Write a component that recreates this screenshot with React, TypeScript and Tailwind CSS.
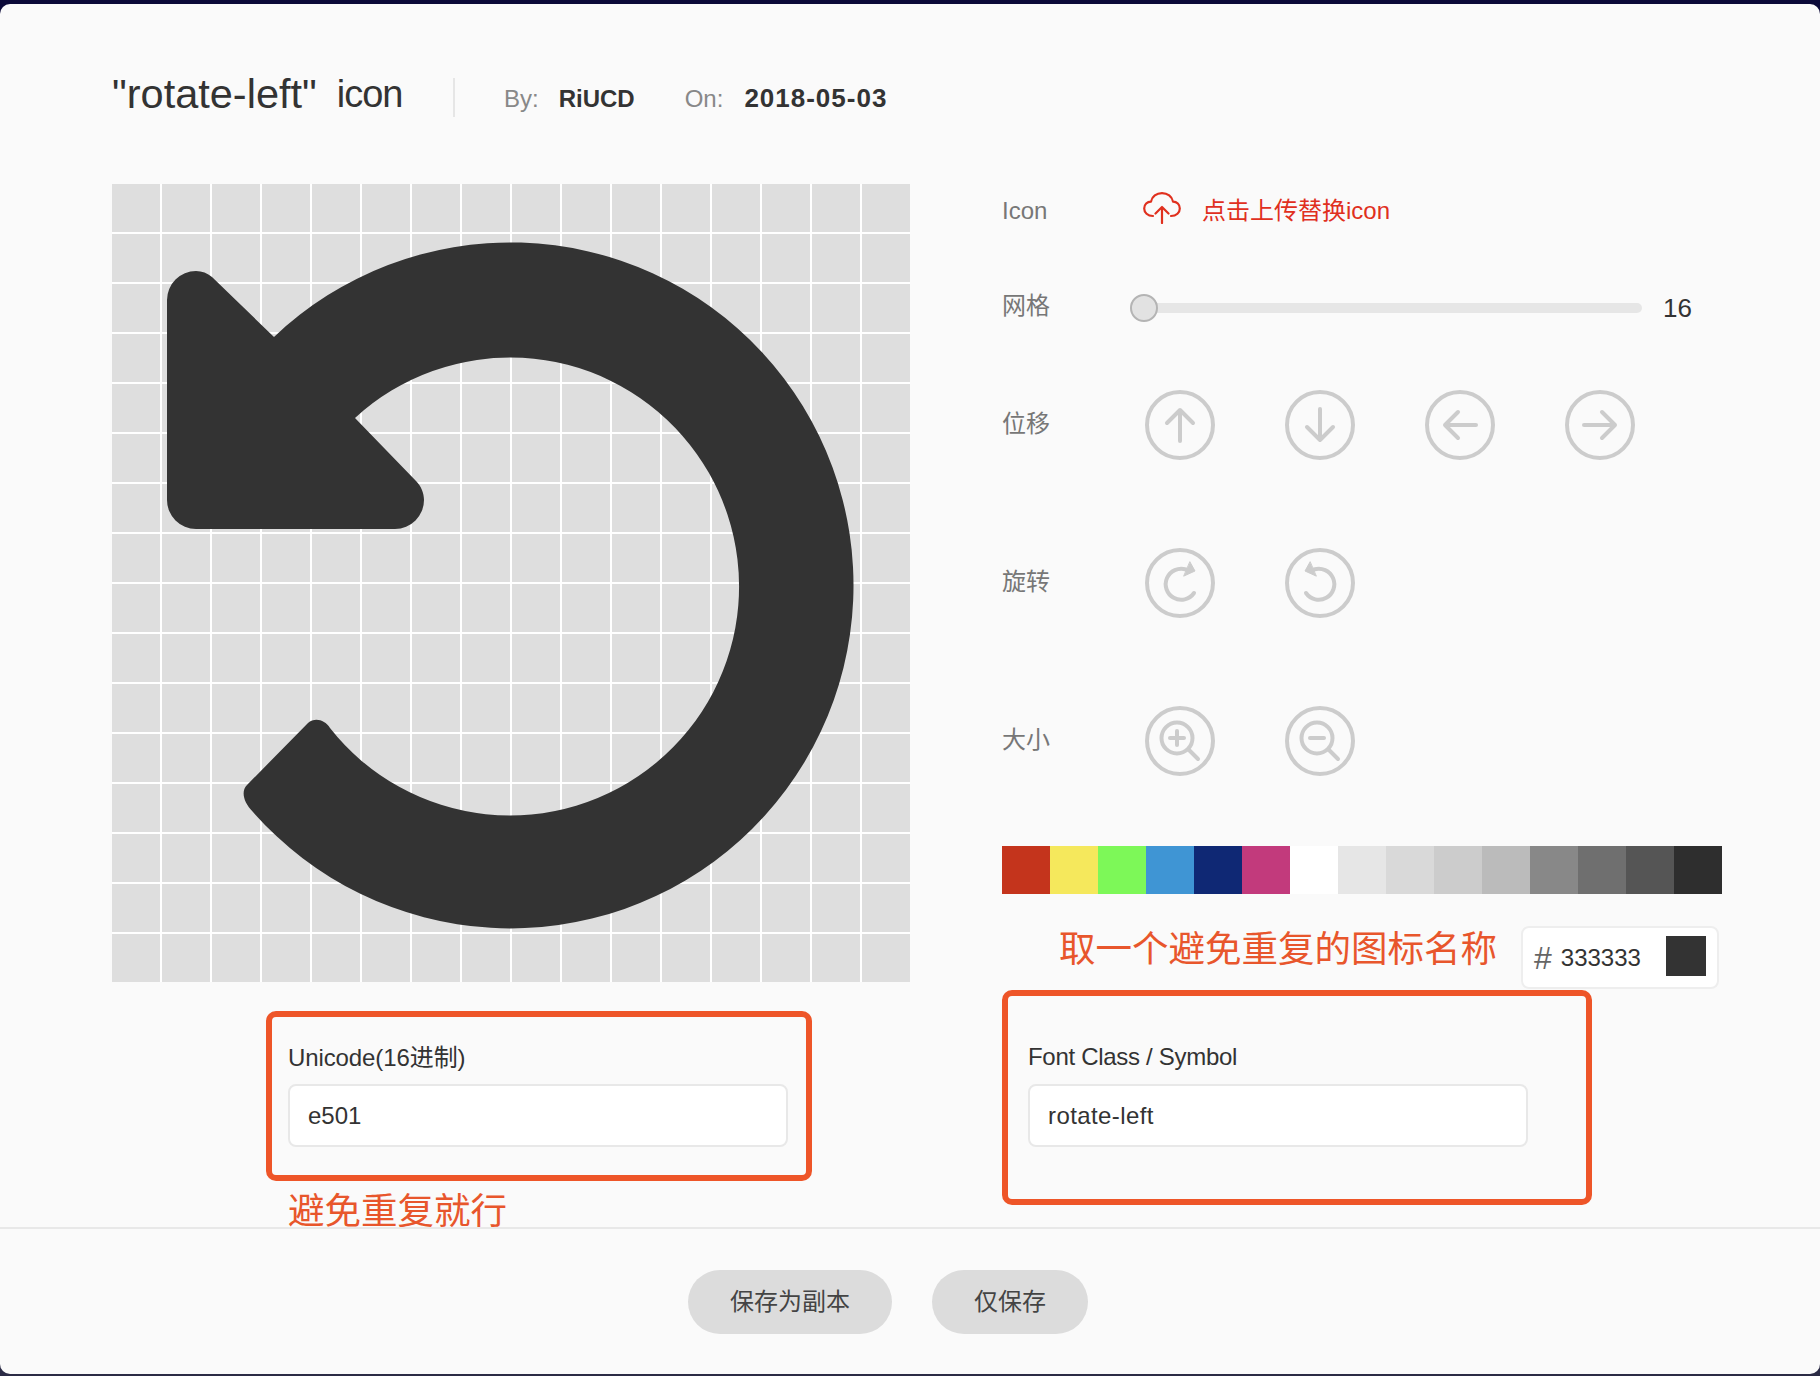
import React from 'react';

const cells = Array.from({ length: 256 }, (_, i) => i);

const swatches = [
  '#c4341c', '#f5e85c', '#7df858', '#3f95d4', '#0f2874', '#c23a7c', '#ffffff', '#e6e6e6',
  '#d9d9d9', '#cccccc', '#bbbbbb', '#888888', '#6f6f6f', '#555555', '#2e2e2e',
];

// round outlined button, glyph is drawn in the same 70x70 box as the ring
const CircleIcon = ({ children }: { children: React.ReactNode }) => (
  <button className="w-[70px] h-[70px] shrink-0">
    <svg width="70" height="70" viewBox="0 0 70 70" fill="none" stroke="#cccccc" strokeWidth="4" strokeLinecap="round" strokeLinejoin="round">
      <circle cx="35" cy="35" r="33" />
      {children}
    </svg>
  </button>
);

const RotateGlyph = () => (
  <>
    <path d="M49 45 A15.5 15.5 0 1 1 41 21.5" />
    <path d="M39 28 L50 23 L45 14 Z" fill="#cccccc" stroke="#cccccc" strokeWidth="1" />
  </>
);

const Label = ({ children, width }: { children: React.ReactNode; width: string }) => (
  <div className={`${width} shrink-0 mb-[2px] text-[24px] leading-[30px] text-[#777777]`}>{children}</div>
);

const TextField = ({ value, className }: { value: string; className?: string }) => (
  <div className={`h-[63px] w-[500px] flex items-center pl-[18px] bg-white border-2 border-[#e8e8e8] rounded-[8px] text-[24px] text-[#333333] ${className ?? ''}`}>
    {value}
  </div>
);

export default function App() {
  return (
    <div className="w-[1820px] h-[1376px] overflow-hidden pt-[4px] bg-linear-to-b from-[#0b0938] to-[#2b2b45] [font-family:'Liberation_Sans','Noto_Sans_CJK_SC',sans-serif]">
      <div className="h-[1370px] w-full flex flex-col bg-[#fafafa] rounded-[10px]">
        <main className="flex-1 min-h-0">
          {/* header */}
          <div className="flex items-center h-[39px] mt-[74px] pl-[112px] text-[#333333]">
            <div className="w-[289px] shrink-0 h-[39px] flex items-start text-[41.5px] leading-[32px] whitespace-nowrap">
              <span>"rotate-left"</span>
              <span className="ml-[20px] text-[38px] tracking-[-1px]">icon</span>
            </div>
            <div className="ml-[52px] w-[2px] h-[39px] bg-[#e6e6e6]" />
            <div className="flex items-center mt-[2px]">
              <div className="ml-[49px] text-[24px] text-[#888888]">By:</div>
              <div className="ml-[20px] text-[24px] font-bold">RiUCD</div>
              <div className="ml-[50px] text-[24px] text-[#888888]">On:</div>
              <div className="ml-[21px] text-[26px] font-bold tracking-[1px]">2018-05-03</div>
            </div>
          </div>

          <div className="flex pl-[112px] mt-[67px]">
            {/* left column */}
            <div className="w-[798px] shrink-0">
              <div className="relative w-[798px] h-[798px] grid grid-cols-[repeat(16,48px)] grid-rows-[repeat(16,48px)] gap-[2px] bg-white">
                {cells.map((c) => (
                  <div key={c} className="bg-[#dedede]" />
                ))}
                <svg className="absolute inset-0" width="798" height="798" viewBox="112 184 798 798">
                  <path
                    fill="#333333"
                    d="M274 337 A343 343 0 1 1 253 812 C243 802 241 791 247 785 L308 723 C315 717 325 720 330 728 A229 229 0 1 0 355 418 L416 481 C421 486 424 493 424 500 A29 29 0 0 1 395 529 L196 529 A29 29 0 0 1 167 500 L167 300 A29 29 0 0 1 196 271 Q205 271 212 277 Z"
                  />
                </svg>
              </div>

              <div className="ml-[154px] mt-[29px] w-[546px] h-[170px] border-[6px] border-[#ee5528] rounded-[10px] pl-[16px] pt-[26px]">
                <div className="text-[24px] leading-[30px] text-[#333333] tracking-[-0.1px]">Unicode(16进制)</div>
                <div className="mt-[11px]">
                  <TextField value="e501" />
                </div>
              </div>
              <div className="ml-[176px] mt-[13px] text-[36.5px] leading-[36px] text-[#e8562c]">避免重复就行</div>
            </div>

            {/* right column */}
            <div className="ml-[92px] w-[720px] shrink-0">
              <div className="h-[56px] flex items-center">
                <Label width="w-[141px]">Icon</Label>
                <svg className="mb-[8px]" width="38" height="32" viewBox="0 0 38 32" fill="none" stroke="#e0301e" strokeWidth="2.2" strokeLinecap="round" strokeLinejoin="round">
                  <path d="M10 24 C4.5 24 1.2 20.5 1.2 16.5 C1.2 12.5 4.2 9.6 8 9.6 C9 4.5 13.5 1.2 19 1.2 C24.5 1.2 29 4.5 30 9.6 C33.8 9.6 36.8 12.5 36.8 16.5 C36.8 20.5 33.5 24 28 24" />
                  <path d="M19 31 V15 M12.5 21.5 L19 15 L25.5 21.5" />
                </svg>
                <div className="ml-[21px] mb-[2px] text-[24px] leading-[30px] text-[#e0301e]">点击上传替换icon</div>
              </div>

              <div className="h-[56px] mt-[39px] flex items-center">
                <Label width="w-[128px]">网格</Label>
                <div className="relative w-[512px] h-[10px] rounded-full bg-[#e6e6e6] mt-[2px]">
                  <div className="absolute left-0 top-[-9px] w-[28px] h-[28px] rounded-full bg-[#e2e2e2] border-2 border-[#b4b4b4]" />
                </div>
                <div className="ml-[21px] text-[26px] text-[#333333] mt-[2px]">16</div>
              </div>

              <div className="h-[70px] mt-[55px] flex items-center">
                <Label width="w-[143px]">位移</Label>
                <div className="flex gap-[70px]">
                  <CircleIcon>
                    <path d="M35 51 V20 M22 33 L35 20 L48 33" />
                  </CircleIcon>
                  <CircleIcon>
                    <path d="M35 19 V50 M22 37 L35 50 L48 37" />
                  </CircleIcon>
                  <CircleIcon>
                    <path d="M51 35 H20 M33 22 L20 35 L33 48" />
                  </CircleIcon>
                  <CircleIcon>
                    <path d="M19 35 H50 M37 22 L50 35 L37 48" />
                  </CircleIcon>
                </div>
              </div>

              <div className="h-[70px] mt-[88px] flex items-center">
                <Label width="w-[143px]">旋转</Label>
                <div className="flex gap-[70px]">
                  <CircleIcon>
                    <RotateGlyph />
                  </CircleIcon>
                  <CircleIcon>
                    <g transform="matrix(-1 0 0 1 70 0)">
                      <RotateGlyph />
                    </g>
                  </CircleIcon>
                </div>
              </div>

              <div className="h-[70px] mt-[88px] flex items-center">
                <Label width="w-[143px]">大小</Label>
                <div className="flex gap-[70px]">
                  <CircleIcon>
                    <circle cx="32" cy="32" r="15.5" />
                    <path d="M44 44 L53 53 M25 32 H39 M32 25 V39" />
                  </CircleIcon>
                  <CircleIcon>
                    <circle cx="32" cy="32" r="15.5" />
                    <path d="M44 44 L53 53 M25 32 H39" />
                  </CircleIcon>
                </div>
              </div>

              <div className="mt-[70px] flex">
                {swatches.map((s) => (
                  <div key={s} className="w-[48px] h-[48px]" style={{ backgroundColor: s }} />
                ))}
              </div>

              <div className="mt-[32px] h-[63px] flex items-center">
                <div className="ml-[57px] w-[462px] mb-[16px] text-[36.5px] leading-[36px] text-[#e8562c] whitespace-nowrap">取一个避免重复的图标名称</div>
                <div className="w-[198px] h-[63px] flex items-center bg-white border-2 border-[#eeeeee] rounded-[8px] pl-[11px] pr-[11px]">
                  <span className="text-[32px] text-[#666666]">#</span>
                  <span className="ml-[9px] text-[24px] text-[#333333]">333333</span>
                  <div className="ml-auto mb-[4px] w-[40px] h-[40px] bg-[#333333]" />
                </div>
              </div>

              <div className="mt-[1px] w-[590px] h-[215px] border-[6px] border-[#ee5528] rounded-[10px] pl-[20px] pt-[46px]">
                <div className="text-[24px] leading-[30px] text-[#333333] tracking-[-0.3px]">Font Class / Symbol</div>
                <div className="mt-[12px]">
                  <TextField value="rotate-left" className="tracking-[0.4px]" />
                </div>
              </div>
            </div>
          </div>
        </main>

        <footer className="h-[147px] shrink-0 border-t-2 border-[#e8e8e8] flex items-center pl-[688px] gap-[40px]">
          <button className="w-[204px] h-[64px] rounded-[32px] bg-[#dcdcdc] text-[24px] text-[#444444]">保存为副本</button>
          <button className="w-[156px] h-[64px] rounded-[32px] bg-[#dcdcdc] text-[24px] text-[#444444]">仅保存</button>
        </footer>
      </div>
    </div>
  );
}
